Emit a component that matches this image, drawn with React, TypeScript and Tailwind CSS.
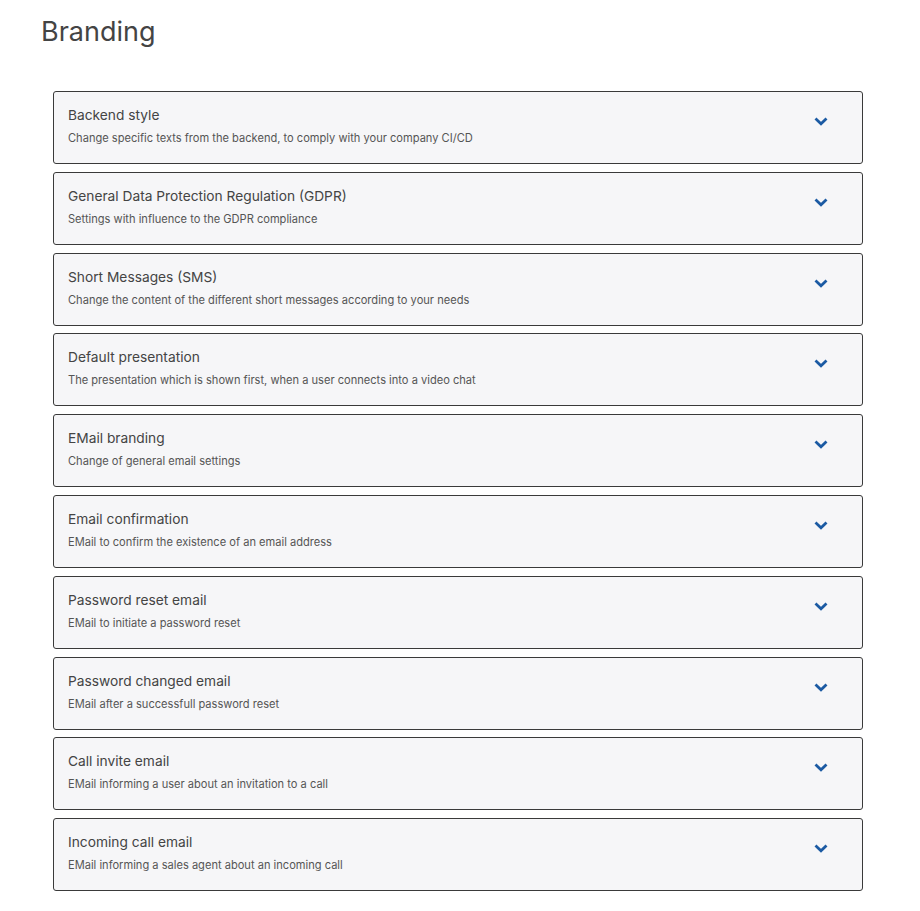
import React from "react";

const items = [
  ["Backend style", "Change specific texts from the backend, to comply with your company CI/CD"],
  ["General Data Protection Regulation (GDPR)", "Settings with influence to the GDPR compliance"],
  ["Short Messages (SMS)", "Change the content of the different short messages according to your needs"],
  ["Default presentation", "The presentation which is shown first, when a user connects into a video chat"],
  ["EMail branding", "Change of general email settings"],
  ["Email confirmation", "EMail to confirm the existence of an email address"],
  ["Password reset email", "EMail to initiate a password reset"],
  ["Password changed email", "EMail after a successfull password reset"],
  ["Call invite email", "EMail informing a user about an invitation to a call"],
  ["Incoming call email", "EMail informing a sales agent about an incoming call"],
];

function Chevron() {
  return (
    <svg width="14" height="10" viewBox="0 0 14 10" fill="none">
      <path d="M2.5 2.5 L7 6.8 L11.5 2.5" stroke="#1b5aa3" strokeWidth="2.8" strokeLinecap="square" />
    </svg>
  );
}

export default function App() {
  return (
    <div className="min-h-[911px] bg-white font-['Inter',sans-serif] text-[#444]">
      <div className="pl-[41px] pt-[14px]">
        <h1 className="text-[27px] leading-[36px] font-normal text-[#444]">Branding</h1>
      </div>
      <div className="ml-[53px] mr-[57px] mt-[41px] flex flex-col gap-[7.8px]">
        {items.map(([t, s]) => (
          <div
            key={t}
            className="h-[73px] rounded-[3px] border border-[#3a3a3a] bg-[#f6f6f8] pl-[14px] pr-[34px] flex items-start pt-[13px]"
          >
            <div className="flex-1">
              <div className="text-[13.75px] leading-[20px] text-[#444]">{t}</div>
              <div className="mt-[5px] text-[11.1px] leading-[16px] text-[#555]">{s}</div>
            </div>
            <div className="pt-[12px]">
              <Chevron />
            </div>
          </div>
        ))}
      </div>
    </div>
  );
}
